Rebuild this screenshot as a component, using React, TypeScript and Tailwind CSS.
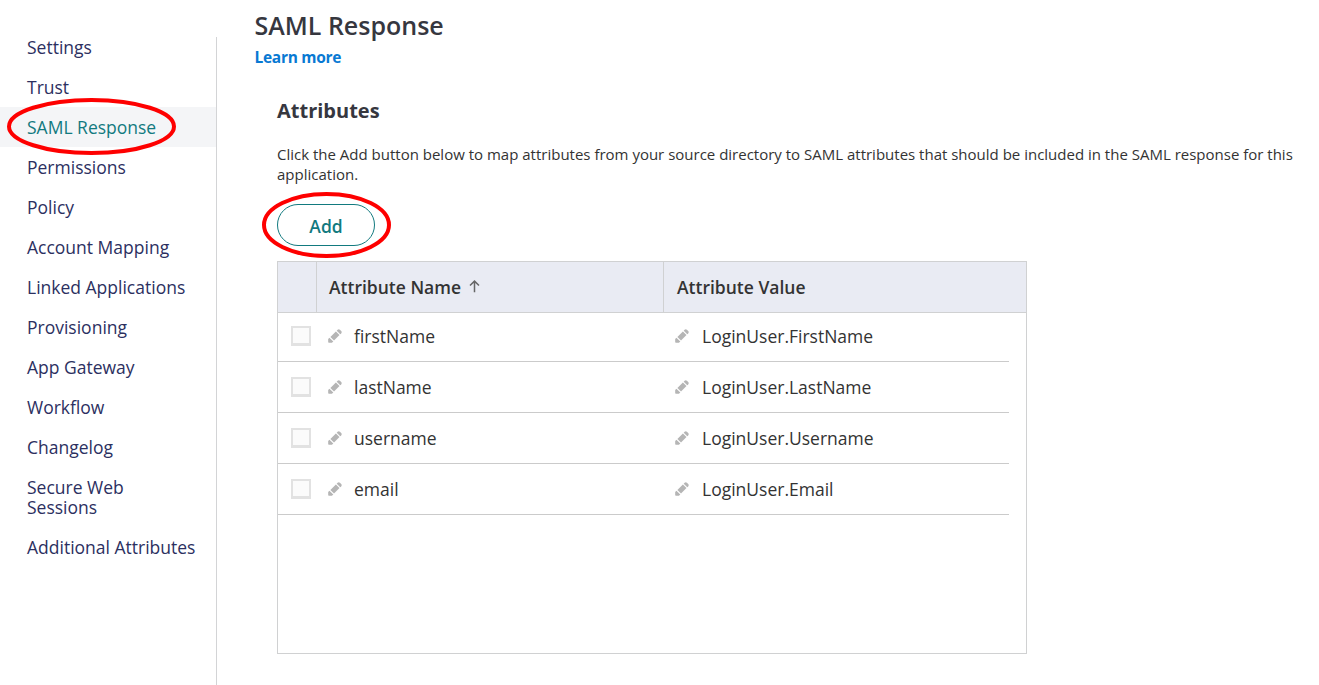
const navItems = [
  "Settings", "Trust", "SAML Response", "Permissions", "Policy", "Account Mapping",
  "Linked Applications", "Provisioning", "App Gateway", "Workflow", "Changelog",
  "Secure Web Sessions", "Additional Attributes",
];

const rows = [
  ["firstName", "LoginUser.FirstName"],
  ["lastName", "LoginUser.LastName"],
  ["username", "LoginUser.Username"],
  ["email", "LoginUser.Email"],
];

function Pencil() {
  return (
    <svg className="block h-[14px] w-[14px] shrink-0" viewBox="0 0 14 14" fill="#b5b5b5">
      <path d="M9.6 .8Q10.8-.2 11.9 .8L13.2 2.1Q14.2 3.2 13.2 4.4L12.3 5.3 8.7 1.7Z" />
      <path d="M7.9 2.5 11.5 6.1 6 11.6 2.4 8Z" />
      <path d="M1.4 8.7 5.3 12.6 3.9 13.8H.9Q.2 13.8.2 13.1V10.1Z" />
    </svg>
  );
}

function Ellipse({ className, width, height }: { className: string; width: number; height: number }) {
  return (
    <svg className={`pointer-events-none absolute z-10 max-w-none ${className}`} width={width} height={height}>
      <ellipse cx={width / 2} cy={height / 2} rx={width / 2 - 2} ry={height / 2 - 2} fill="none" stroke="#fe0000" strokeWidth="4" />
    </svg>
  );
}

export default function App() {
  return (
    <div className="flex h-[685px] w-[1319px] overflow-hidden bg-white font-['Open_Sans',sans-serif] text-[#333]">
      <nav className="mt-[37px] w-[217px] shrink-0 border-r border-[#d3d4d6]">
        <ul className="-mt-[10px]">
          {navItems.map((item) => (
            <li
              key={item}
              className={`relative py-[10px] pl-[27px] text-[17.5px] leading-5 ${
                item === "SAML Response" ? "bg-[#f4f5f7] text-[#127a7f]" : "text-[#2c305f]"
              } ${item === "Secure Web Sessions" ? "pr-[60px]" : "pr-5"}`}
            >
              <span>{item}</span>
              {item === "SAML Response" && <Ellipse className="left-[7px] top-[-9px]" width={169} height={57} />}
            </li>
          ))}
        </ul>
      </nav>
      <main className="min-w-0 flex-1 pl-[37px]">
        <h1 className="mt-[7px] h-[36px] pl-[0.5px] text-[25px] font-semibold leading-[36px] text-[#36373f]">SAML Response</h1>
        <a className="mt-[4px] block h-5 pl-[0.5px] text-[15.5px] font-bold leading-5 tracking-[-0.29px] text-[#0879d3]">Learn more</a>
        <section className="pl-[23px]">
          <h2 className="mt-[30px] h-7 text-[20px] font-bold leading-7 text-[#36373f]">Attributes</h2>
          <p className="mt-[19px] h-10 w-[1030px] text-[15px] leading-5">
            Click the Add button below to map attributes from your source directory to SAML attributes that should be included in the SAML response for this application.
          </p>
          <div className="relative mt-[20px] w-[98px]">
            <button className="block h-[42px] w-[98px] rounded-full border border-[#127a7f] pt-[2px] text-[17.5px] font-semibold text-[#127a7f]">
              Add
            </button>
            <Ellipse className="left-[-15px] top-[-12px]" width={129} height={66} />
          </div>
          <div className="mt-[15px] h-[393px] w-[750px] border border-[#d0d1d2]">
            <div className="flex h-[51px] items-center border-b border-[#d0d1d2] bg-[#e9ebf3] text-[17.5px] font-semibold">
              <div className="h-full w-[39px] border-r border-[#d0d1d2]" />
              <div className="flex h-full w-[347px] items-center border-r border-[#d0d1d2] pl-[12px]">
                <span>Attribute Name</span>
                <svg className="mb-px ml-[8px] h-[13px] w-[11px]" viewBox="0 0 11 13" fill="none" stroke="#666" strokeWidth="1.5">
                  <path d="M5.5 12.3V1.3M1 5.5 5.5 1.1 10 5.5" />
                </svg>
              </div>
              <span className="pl-[13px]">Attribute Value</span>
            </div>
            {rows.map(([name, value], i) => (
              <div
                key={name}
                className={`flex w-[731px] items-center border-b border-[#cbcbcb] text-[17.5px] ${i === 0 ? "h-[49px] pb-[2px]" : "h-[51px]"}`}
              >
                <span className="ml-[13px] h-5 w-5 border-2 border-[#e2e2e2] border-b-[3px] bg-[#fbfbfb]" />
                <div className="ml-[17px] flex w-[347px] items-center gap-[12px]">
                  <Pencil />
                  <span>{name}</span>
                </div>
                <div className="flex items-center gap-[13px]">
                  <Pencil />
                  <span>{value}</span>
                </div>
              </div>
            ))}
          </div>
        </section>
      </main>
    </div>
  );
}
